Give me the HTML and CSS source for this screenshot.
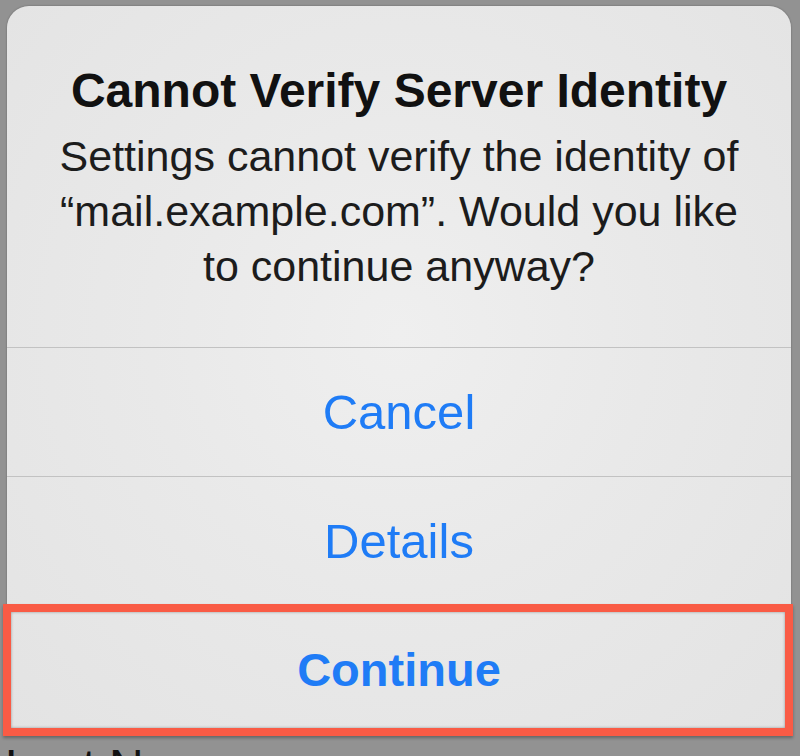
FILE: index.html
```html
<!DOCTYPE html>
<html>
<head>
<meta charset="utf-8">
<link rel="stylesheet" href="styles.css">
</head>
<body>
  <div class="page">
    <div class="page-row">Last Name</div>
  </div>
  <div class="alert">
    <div class="alert-head">
      <h1 class="alert-title">Cannot Verify Server Identity</h1>
      <p class="alert-msg">Settings cannot verify the identity of<br>“mail.example.com”. Would you like<br>to continue anyway?</p>
    </div>
    <div class="alert-btn">Cancel</div>
    <div class="alert-btn">Details</div>
    <div class="alert-btn alert-btn--bold">Continue</div>
  </div>
  <div class="highlight"></div>
</body>
</html>
```
FILE: styles.css
```css
html, body {
  margin: 0;
  padding: 0;
}
body {
  width: 800px;
  height: 756px;
  overflow: hidden;
  background: #929292;
  font-family: "Liberation Sans", Arial, sans-serif;
  position: relative;
}
.page {
  height: 756px;
  padding-top: 743px;
  box-sizing: border-box;
}
.page-row {
  padding-left: 5px;
  font-size: 48px;
  line-height: 48px;
  color: #111;
}
.alert {
  position: absolute;
  left: 7px;
  top: 6px;
  width: 784px;
  border-radius: 22px 22px 0 0;
  background: radial-gradient(ellipse at 50% 45%, #efefef 0%, #e9e9e9 45%, #e3e3e3 100%);
  box-shadow: 0 0 2px rgba(0,0,0,0.35);
  display: flex;
  flex-direction: column;
}
.alert-head {
  padding: 57px 6px 53px;
  text-align: center;
  color: #111;
}
.alert-title {
  margin: 0;
  font-size: 48px;
  line-height: 56px;
  font-weight: bold;
}
.alert-msg {
  margin: 10px 0 0;
  font-size: 43px;
  line-height: 55px;
  color: #1c1c1c;
}
.alert-btn {
  border-top: 1px solid #c2c2c2;
  height: 128px;
  line-height: 128px;
  text-align: center;
  font-size: 49px;
  color: #1f7cf6;
}
.alert-btn--bold {
  font-weight: bold;
  font-size: 47px;
}
.highlight {
  position: absolute;
  left: 3px;
  top: 604px;
  width: 790px;
  height: 132px;
  box-sizing: border-box;
  border: 8px solid #f95b45;
  box-shadow: inset 0 0 3px rgba(0,0,0,0.35), 0 2px 3px rgba(0,0,0,0.3);
}
```
